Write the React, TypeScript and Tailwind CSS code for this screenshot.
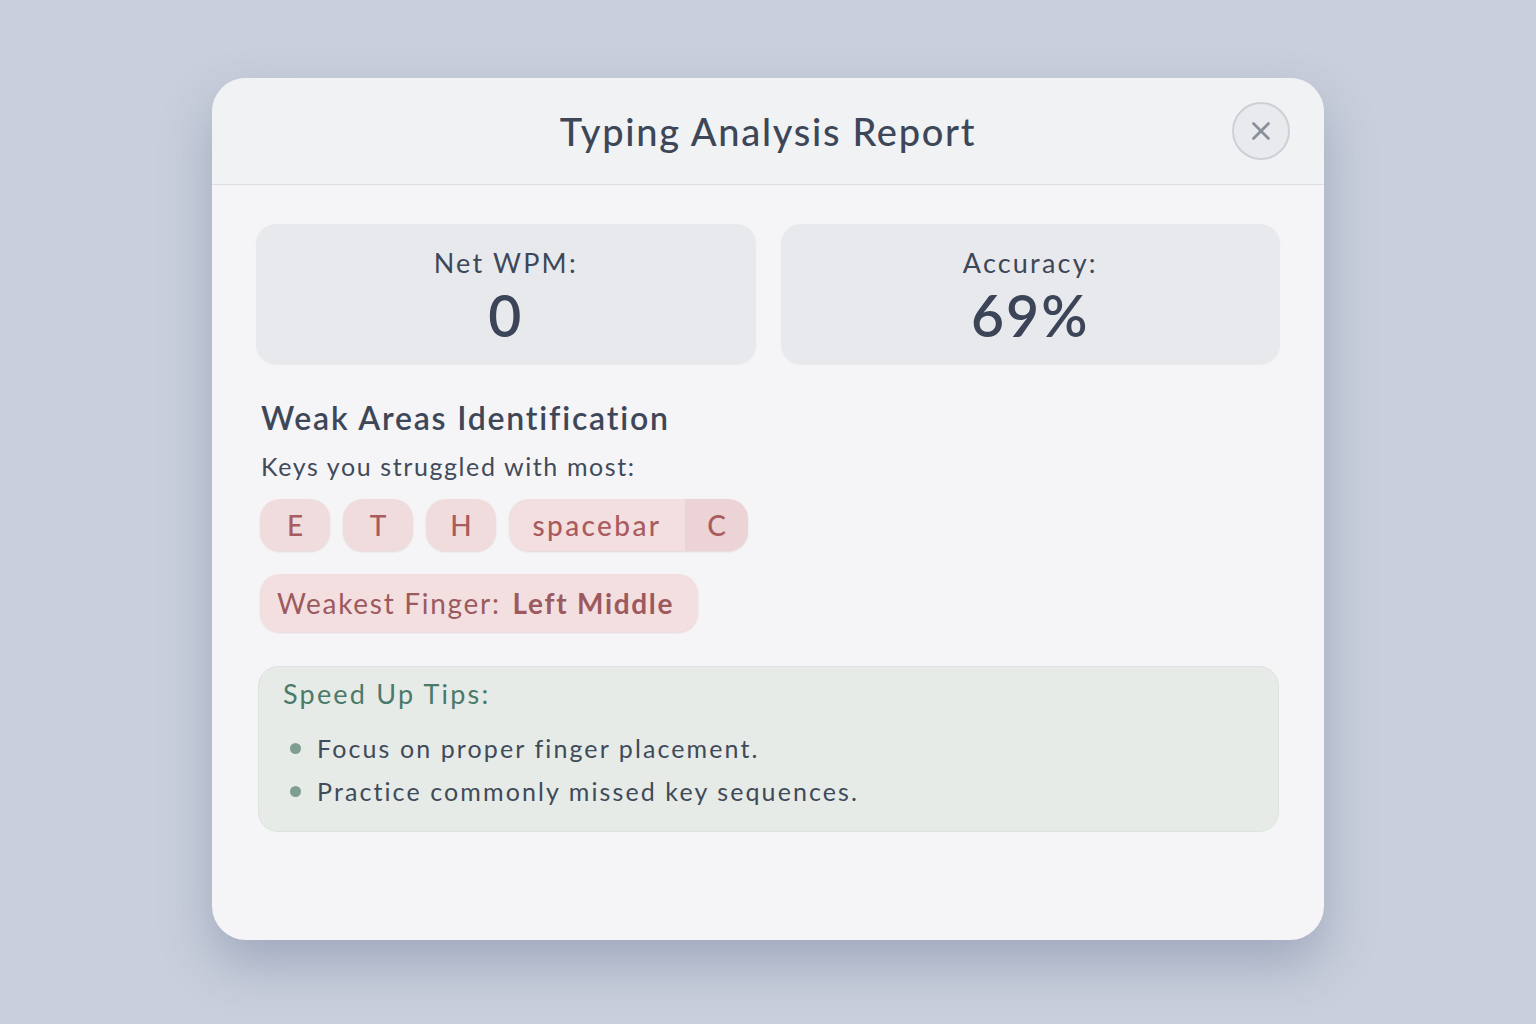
import { X } from 'lucide-react';

const keys = ['E', 'T', 'H'];

const tips = ['Focus on proper finger placement.', 'Practice commonly missed key sequences.'];

const StatCard = ({ label, value }: { label: string; value: string }) => (
  <div className="flex h-[140px] flex-col items-center justify-center rounded-[20px] bg-[#e8e9ed] pt-[4px] shadow-[0_1px_2px_rgba(60,70,90,0.06)]">
    <div className="text-[27px] leading-none tracking-[2.2px] text-[#3d4758]">{label}</div>
    <div className="mt-[11px] text-[57px] font-semibold leading-none tracking-[2px] text-[#3b4557]">{value}</div>
  </div>
);

export default function App() {
  return (
    <div className="flex min-h-screen items-start justify-center bg-[#c9cfdb] pt-[78px] font-['Lato',sans-serif]">
      <div className="h-[862px] w-[1112px] overflow-hidden rounded-[34px] bg-[#f5f5f7] shadow-[0_24px_50px_rgba(110,125,155,0.45)]">
        {/* Header */}
        <div className="relative flex h-[107px] items-center justify-center border-b border-[#dcdee3] bg-[#f1f2f4]">
          <h1 className="text-[38px] font-medium tracking-[1.7px] text-[#3d4758]">Typing Analysis Report</h1>
          <button
            className="absolute right-[34px] top-[24px] flex h-[58px] w-[58px] items-center justify-center rounded-full border-2 border-[#cdd0d6] bg-[#e9eaed]"
            aria-label="Close"
          >
            <X className="h-[30px] w-[30px] text-[#8a909b]" strokeWidth={2.2} />
          </button>
        </div>

        {/* Body */}
        <div className="px-[44px] pt-[39px]">
          <div className="grid grid-cols-2 gap-[25px]">
            <StatCard label="Net WPM:" value="0" />
            <StatCard label="Accuracy:" value="69%" />
          </div>

          <h2 className="ml-[5px] mt-[38px] text-[32px] font-semibold leading-none tracking-[1.8px] text-[#3d4758]">
            Weak Areas Identification
          </h2>
          <p className="ml-[5px] mt-[20px] text-[25px] leading-none tracking-[1.6px] text-[#414b5b]">
            Keys you struggled with most:
          </p>

          <div className="ml-[4px] mt-[20px] flex gap-[13px]">
            {keys.map((k) => (
              <div
                key={k}
                className="flex h-[52px] w-[70px] items-center justify-center rounded-[20px] bg-[#f1dcdd] text-[28px] font-medium text-[#a95b5f] shadow-[0_1px_2px_rgba(160,90,95,0.2)]"
              >
                {k}
              </div>
            ))}
            <div className="flex h-[52px] overflow-hidden rounded-[20px] bg-[#f3dfe0] text-[28px] font-medium text-[#a95b5f] shadow-[0_1px_2px_rgba(160,90,95,0.2)]">
              <div className="flex w-[176px] items-center justify-center tracking-[2.4px]">spacebar</div>
              <div className="flex w-[63px] items-center justify-center bg-[#ecd4d6]">C</div>
            </div>
          </div>

          <div className="ml-[4px] mt-[23px] inline-flex h-[58px] items-center gap-[12px] rounded-[20px] bg-[#f3dfe0] pl-[17px] pr-[24px] text-[28px] tracking-[1.7px] text-[#9c5a5e] shadow-[0_1px_2px_rgba(160,90,95,0.2)]">
            <span>Weakest Finger:</span>
            <span className="font-bold">Left Middle</span>
          </div>

          <div className="ml-[2px] mr-[1px] mt-[34px] h-[166px] rounded-[20px] border border-[#dde3de] bg-[#e6ebe7] px-[24px] pt-[7px]">
            <div className="text-[27px] tracking-[2.2px] text-[#4a7a6a]">Speed Up Tips:</div>
            <ul className="mt-[17px] flex flex-col gap-[10px]">
              {tips.map((t) => (
                <li key={t} className="flex items-center gap-[16px] text-[25px] leading-[33px] tracking-[2.1px] text-[#3f4a5a]">
                  <span className="ml-[7px] h-[11px] w-[11px] rounded-full bg-[#7f9e92]" />
                  {t}
                </li>
              ))}
            </ul>
          </div>
        </div>
      </div>
    </div>
  );
}
